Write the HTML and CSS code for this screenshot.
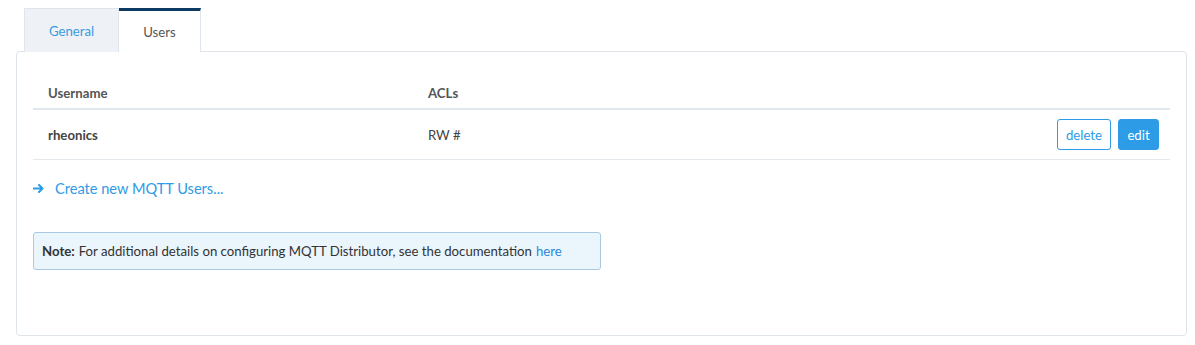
FILE: index.html
```html
<!DOCTYPE html>
<html>
<head>
<meta charset="utf-8">
<link rel="stylesheet" href="styles.css">
</head>
<body>
<div class="page">
  <div class="tabs">
    <div class="tab">General</div>
    <div class="tab active">Users</div>
  </div>
  <div class="panel">
    <table class="users">
      <thead>
        <tr><th class="c-user">Username</th><th class="c-acl">ACLs</th><th></th></tr>
      </thead>
      <tbody>
        <tr>
          <td class="c-user name">rheonics</td>
          <td class="c-acl">RW #</td>
          <td class="c-act"><div class="actions"><button class="btn btn-outline">delete</button><button class="btn btn-primary">edit</button></div></td>
        </tr>
      </tbody>
    </table>
    <a class="create" href="#"><svg class="arrow" width="11" height="9" viewBox="0 0 11 9"><path d="M0.5 4.5H9.5M6 1L9.5 4.5L6 8" fill="none" stroke="#2d9be6" stroke-width="2" stroke-linecap="round" stroke-linejoin="round"/></svg>Create new MQTT Users...</a>
    <div class="note"><b>Note:</b> For additional details on configuring MQTT Distributor, see the documentation <a href="#">here</a></div>
  </div>
</div>
</body>
</html>
```
FILE: styles.css
```css
* { box-sizing: border-box; }
body { margin: 0; font-family: "Lato", "Open Sans", sans-serif; color: #444; background: #fff; }
.page { padding: 8px 8px 9px 16px; }
.tabs { display: flex; padding-left: 8px; position: relative; z-index: 1; }
.tab { height: 44px; display: flex; align-items: center; justify-content: center; font-size: 13.2px; color: #3a9ae0; background: #eef2f6; border: 1px solid #dfe5ec; border-bottom: none; }
.tab:first-child { width: 95px; }
.tab.active { background: #fff; color: #555; border-top: 3px solid #0d3a63; border-left: none; width: 82px; }
.panel { margin-top: -1px; border: 1px solid #dfe4ea; border-radius: 4px; padding: 24px 16px 64px; height: 285px; }
.users { width: 100%; border-collapse: collapse; font-size: 13.2px; }
.users th { text-align: left; font-weight: 700; color: #555; padding: 8px 15px 7px; border-bottom: 2px solid #e1e7ee; height: 33px; }
.users td { padding: 9px 15px; border-bottom: 1px solid #e4e9ee; color: #444; height: 50px; }
.c-user { width: 380px; }
.name { font-weight: 700; color: #333; }
.c-act { padding-right: 10px !important; }
.actions { display: flex; justify-content: flex-end; gap: 7px; }
.btn { font-family: inherit; font-size: 13.2px; height: 31px; border-radius: 3px; padding: 0; cursor: pointer; }
.btn-outline { background: #fff; color: #2d9be6; border: 1px solid #2d9be6; width: 54px; }
.btn-primary { background: #2d9be6; color: #fff; border: 1px solid #2d9be6; width: 41px; margin-right: 1px; }
.create { display: flex; align-items: center; margin-top: 17px; font-size: 14.6px; color: #2d9be6; text-decoration: none; height: 22px; }
.arrow { margin-right: 11px; flex: none; }
.note { margin-top: 33px; width: 568px; height: 38px; display: flex; align-items: center; padding: 0 8px; background: #eaf5fc; border: 1px solid #a9c9e2; border-radius: 3px; font-size: 13.2px; color: #333; }
.note b { margin-right: 4px; }
.note a { color: #2d89d6; text-decoration: none; margin-left: 4px; }
```
